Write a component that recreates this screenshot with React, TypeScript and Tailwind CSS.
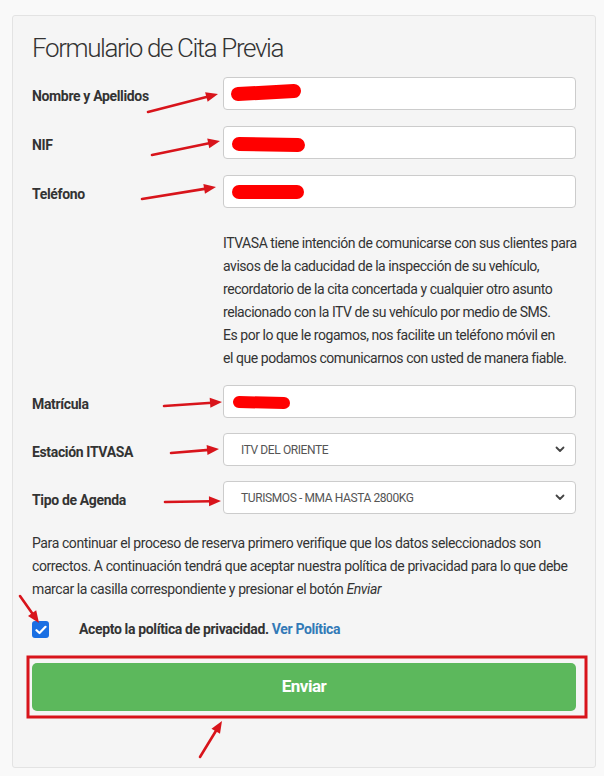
import React from "react";

const FONT = { fontFamily: '"Roboto", "Liberation Sans", sans-serif' };

function Arrow({ x1, y1, x2, y2, head = 12, w = 5 }: { x1: number; y1: number; x2: number; y2: number; head?: number; w?: number }) {
  const dx = x2 - x1;
  const dy = y2 - y1;
  const len = Math.sqrt(dx * dx + dy * dy);
  const ux = dx / len;
  const uy = dy / len;
  const bx = x2 - ux * head;
  const by = y2 - uy * head;
  const px = -uy * w;
  const py = ux * w;
  return (
    <g>
      <line x1={x1} y1={y1} x2={bx + ux * 2} y2={by + uy * 2} stroke="#d8141b" strokeWidth={2.6} strokeLinecap="round" />
      <polygon points={`${x2},${y2} ${bx + px},${by + py} ${bx - px},${by - py}`} fill="#d8141b" />
    </g>
  );
}

function TextInput() {
  return <div className="h-[33px] rounded-[4px] border border-[#cccccc] bg-white" />;
}

function Select({ value }: { value: string }) {
  return (
    <div className="flex h-[33px] items-center justify-between rounded-[4px] border border-[#cccccc] bg-white pl-[17px] pr-[10px] text-[12px] tracking-[-0.4px] text-[#555555]">
      <span>{value}</span>
      <svg width="10" height="7" viewBox="0 0 10 7">
        <path d="M1.5 1.5 L5 5 L8.5 1.5" fill="none" stroke="#444" strokeWidth="1.8" strokeLinecap="round" strokeLinejoin="round" />
      </svg>
    </div>
  );
}

function Row({ label, children }: { label: string; children: React.ReactNode }) {
  return (
    <div className="grid grid-cols-[191px_1fr] items-center">
      <label className="whitespace-nowrap pt-[5px] text-[14px] font-bold tracking-[-0.35px] text-[#333333]">{label}</label>
      {children}
    </div>
  );
}

export default function App() {
  return (
    <div className="relative min-h-[776px] bg-[#f9f9f9] pl-[12px] pr-[8px] pt-[15px]" style={FONT}>
      <div className="rounded-[3px] border border-[#e3e3e3] bg-[#f5f5f5] px-[19px] pb-[56px] pt-[17px] text-[#333333]">
        <h1 className="mb-[14px] whitespace-nowrap text-[26px] font-light leading-[30px] tracking-[-1.4px] text-[#333333]">Formulario de Cita Previa</h1>
        <div className="flex flex-col gap-[16px]">
          <Row label="Nombre y Apellidos"><TextInput /></Row>
          <Row label="NIF"><TextInput /></Row>
          <Row label="Teléfono"><TextInput /></Row>
        </div>
        <p className="ml-[191px] mt-[24px] whitespace-nowrap text-[14px] leading-[23px] tracking-[-0.45px] text-[#333333]">
          ITVASA tiene intención de comunicarse con sus clientes para<br />
          avisos de la caducidad de la inspección de su vehículo,<br />
          recordatorio de la cita concertada y cualquier otro asunto<br />
          relacionado con la ITV de su vehículo por medio de SMS.<br />
          Es por lo que le rogamos, nos facilite un teléfono móvil en<br />
          el que podamos comunicarnos con usted de manera fiable.
        </p>
        <div className="mt-[15px] flex flex-col gap-[15px]">
          <Row label="Matrícula"><TextInput /></Row>
          <Row label="Estación ITVASA"><Select value="ITV DEL ORIENTE" /></Row>
          <Row label="Tipo de Agenda"><Select value="TURISMOS - MMA HASTA 2800KG" /></Row>
        </div>
        <p className="mt-[18px] whitespace-nowrap text-[14px] leading-[23px] tracking-[-0.4px] text-[#333333]">
          Para continuar el proceso de reserva primero verifique que los datos seleccionados son<br />
          correctos. A continuación tendrá que aceptar nuestra política de privacidad para lo que debe<br />
          marcar la casilla correspondiente y presionar el botón <em>Enviar</em>
        </p>
        <div className="mt-[18px] flex items-center">
          <span className="flex h-[17px] w-[17px] items-center justify-center rounded-[3px] bg-[#1a6fe3]">
            <svg width="12" height="10" viewBox="0 0 12 10">
              <path d="M1.5 5.2 L4.5 8 L10.5 1.8" fill="none" stroke="white" strokeWidth="2.2" strokeLinecap="round" strokeLinejoin="round" />
            </svg>
          </span>
          <span className="ml-[30px] whitespace-nowrap text-[14px] font-bold tracking-[-0.35px] text-[#333333]">
            Acepto la política de privacidad. <a className="text-[#337ab7]">Ver Política</a>
          </span>
        </div>
        <button className="mt-[23px] flex h-[48px] w-full items-center justify-center rounded-[5px] bg-[#5cb85c] text-[17px] font-bold tracking-[-0.5px] text-white">
          Enviar
        </button>
      </div>
      <svg className="pointer-events-none absolute left-0 top-0" width="604" height="776" viewBox="0 0 604 776">
        <line x1="238" y1="94" x2="294" y2="91" stroke="#ff0000" strokeWidth="14" strokeLinecap="round" />
        <line x1="239" y1="144" x2="298" y2="145" stroke="#ff0000" strokeWidth="14" strokeLinecap="round" />
        <line x1="239" y1="192" x2="297" y2="192" stroke="#ff0000" strokeWidth="14" strokeLinecap="round" />
        <line x1="239" y1="402" x2="284" y2="403" stroke="#ff0000" strokeWidth="12" strokeLinecap="round" />
        <Arrow x1={148} y1={112} x2={218} y2={94} />
        <Arrow x1={152} y1={155} x2={220} y2={141} />
        <Arrow x1={142} y1={199} x2={216} y2={187} />
        <Arrow x1={164} y1={406} x2={222} y2={402} />
        <Arrow x1={171} y1={453} x2={219} y2={449} />
        <Arrow x1={165} y1={502} x2={221} y2={501} />
        <Arrow x1={20} y1={596} x2={39} y2={623} />
        <Arrow x1={200} y1={757} x2={222} y2={721} />
        <rect x="28" y="657" width="558" height="60" fill="none" stroke="#d8141b" strokeWidth="3" />
      </svg>
    </div>
  );
}
